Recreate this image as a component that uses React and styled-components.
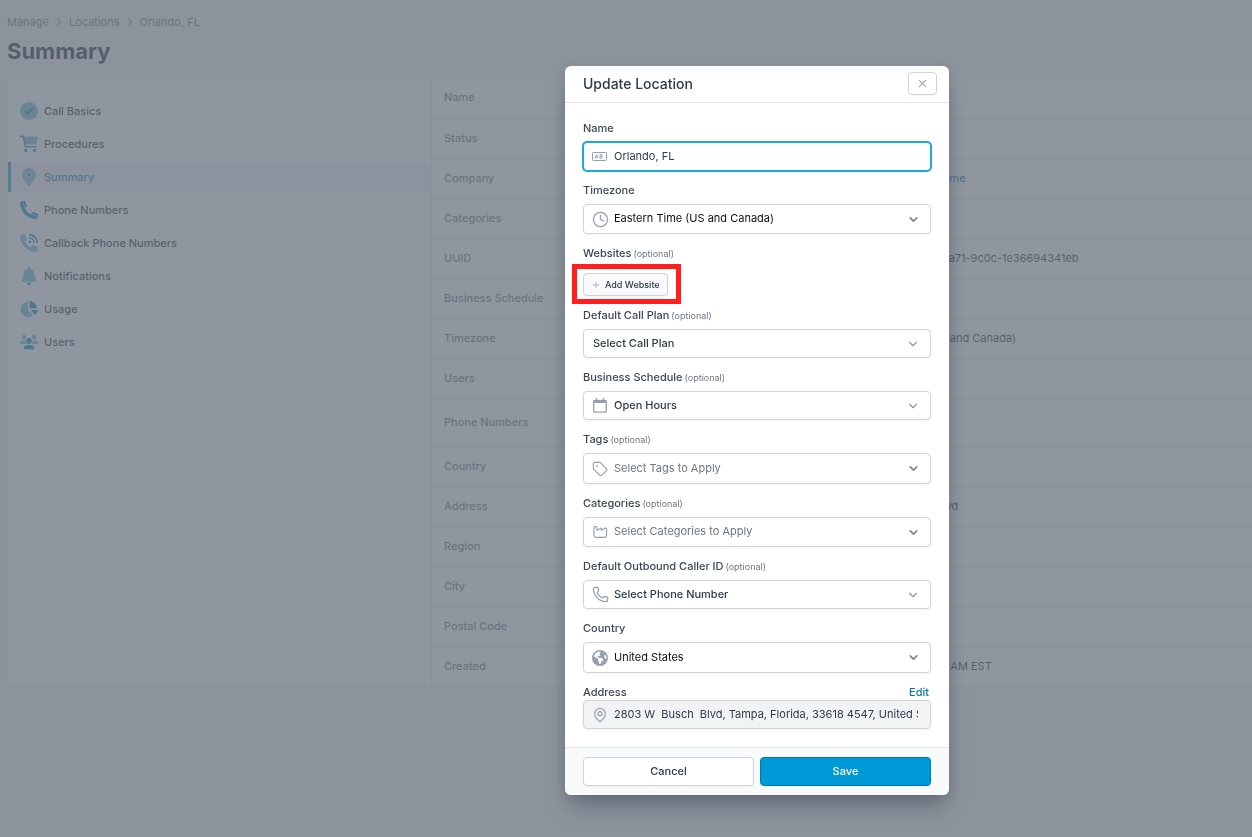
import { useState } from "react";
import styled, { createGlobalStyle, css } from "styled-components";
import { Clock, MapPin, Phone, Plus, Tag, X, ChevronRight, ChevronDown } from "lucide-react";
import { FaEarthAmericas } from "react-icons/fa6";

const GlobalStyle = createGlobalStyle`
  *, *::before, *::after { box-sizing: border-box; }
  body {
    margin: 0;
    background: #f3f4f6;
    color: #1f2937;
    font-family: Inter, "Liberation Sans", sans-serif;
    font-size: 11px;
    line-height: 16px;
  }
  html { background: #f3f4f6; }
  button, input, select { font: inherit; color: inherit; }
  a { color: inherit; text-decoration: none; }
`;

/* ---------- page ---------- */

const Page = styled.main`
  padding: 14px 0 0 7px;
`;

const Breadcrumbs = styled.nav`
  display: flex;
  align-items: center;
  gap: 3px;
  color: #6b7280;
  svg { color: #9ca3af; }
`;

const PageTitle = styled.h1`
  margin: 5px 0 10px;
  font-size: 22px;
  line-height: 32px;
  font-weight: 700;
  color: #0f2433;
`;

const Panel = styled.section`
  display: grid;
  grid-template-columns: 424px 1fr;
  background: #fff;
  border: 1px solid #e5e7eb;
  border-right: 0;
  border-radius: 6px 0 0 6px;
`;

const SideNav = styled.nav`
  display: flex;
  flex-direction: column;
  gap: 3px;
  padding: 18px 0;
  border-right: 1px solid #e5e7eb;
`;

const NavItem = styled.a`
  display: flex;
  align-items: center;
  gap: 6px;
  height: 30px;
  padding-left: 9px;
  border-left: 3px solid transparent;
  font-weight: 500;
  color: #1f2937;
  ${(p) =>
    p.$active &&
    css`
      background: #eff0fa;
      border-color: #0ea5d7;
      color: #0284b8;
    `}
`;

const Details = styled.dl`
  margin: 0;
`;

const DetailRow = styled.div`
  display: grid;
  grid-template-columns: 51fr 49fr;
  align-items: center;
  min-height: ${(p) => (p.$tall ? 48 : 40)}px;
  padding: 0 0 2px 12px;
  & + & {
    border-top: 1px solid #e5e7eb;
  }
  dt {
    color: #6b7280;
    font-weight: 500;
  }
  dd {
    margin: 0;
    color: #1f2937;
  }
  a {
    color: #0284c7;
    font-weight: 500;
  }
`;

/* ---------- modal ---------- */

const Backdrop = styled.div`
  position: fixed;
  inset: 0;
  display: flex;
  justify-content: center;
  align-items: flex-start;
  padding: 66px 0 0 262px;
  overflow: auto;
  background: rgba(107, 115, 127, 0.75);
`;

const Dialog = styled.form`
  width: 384px;
  border-radius: 6px;
  background: #fff;
  overflow: hidden;
  box-shadow: 0 16px 24px -4px rgba(30, 41, 59, 0.3), 0 4px 12px rgba(30, 41, 59, 0.15);
`;

const DialogHeader = styled.header`
  display: flex;
  align-items: center;
  justify-content: space-between;
  height: 37px;
  padding: 0 12px 1px 18px;
  border-bottom: 1px solid #e2e5e9;
  h2 {
    margin: 0;
    font-size: 14px;
    line-height: 20px;
    font-weight: 500;
    color: #2c3b4b;
  }
`;

const Button = styled.button`
  display: inline-flex;
  align-items: center;
  justify-content: center;
  height: 29px;
  padding: 0 8px 2px;
  border: 1px solid #ced4da;
  border-radius: 4px;
  background: #fff;
  color: #2c3b4b;
  font-weight: 500;
  box-shadow: 0 1px 2px rgba(0, 0, 0, 0.05);
  cursor: pointer;
`;

const CloseButton = styled(Button)`
  width: 29px;
  height: 23px;
  padding: 0;
  color: #a6adb5;
`;

const SmallButton = styled(Button)`
  gap: 4px;
  height: 23px;
  padding: 0 7px;
  background: #f8fafc;
  font-size: 9px;
  svg { color: #a6adb5; }
`;

const SaveButton = styled(Button)`
  background: #0099d8;
  border-color: #0079b0;
  color: #fff;
`;

const DialogBody = styled.div`
  display: flex;
  flex-direction: column;
  gap: 11px;
  padding: 17px 18px 18px;
`;

const DialogFooter = styled.footer`
  display: grid;
  grid-template-columns: 1fr 1fr;
  gap: 6px;
  padding: 9px 18px;
  border-top: 1px solid #e2e5e9;
  background: #f8fafc;
`;

const Field = styled.div`
  display: flex;
  flex-direction: column;
  gap: ${(p) => (p.$tight ? 0 : 6)}px;
`;

const LabelRow = styled.div`
  display: flex;
  justify-content: space-between;
  height: 16px;
  padding-right: 2px;
  font-weight: 500;
  color: #3b4856;
  small {
    margin-left: 2px;
    font-size: 9px;
    line-height: 1;
    font-weight: 400;
    color: #6b7784;
  }
  a { color: #0079b0; }
`;

// icon, control and chevron share one grid cell
const ControlBox = styled.div`
  display: grid;
  align-items: center;
  > * { grid-area: 1 / 1; }
  > svg {
    margin-left: 9px;
    color: #94a0ad;
    pointer-events: none;
    z-index: 1;
  }
  > svg:last-child:not(:first-child) {
    justify-self: end;
    margin: 0 11px 0 0;
  }
`;

const controlStyle = css`
  width: 100%;
  height: ${(p) => p.$height || 29}px;
  padding: 0 12px 2px ${(p) => (p.$plain ? 9 : 30)}px;
  border: 1px solid #ced4da;
  border-radius: 4px;
  background: #fff;
  box-shadow: 0 1px 2px rgba(0, 0, 0, 0.05);
  outline: none;
`;

const TextInput = styled.input`
  ${controlStyle}
  color: #2c3b4b;
  ${(p) =>
    p.$focused &&
    css`
      border-color: #1ba8dc;
      box-shadow: 0 0 0 1px #1ba8dc;
    `}
  &:read-only {
    background: #f1f3f5;
  }
`;

const Select = styled.select`
  ${controlStyle}
  appearance: none;
  color: ${(p) => (p.$tone === "muted" ? "#6b7784" : p.$tone === "black" ? "#0b0f14" : "#2c3b4b")};
  font-weight: ${(p) => (p.$tone ? 400 : 500)};
`;

const AddWebsite = styled.div`
  position: relative;
  align-self: flex-start;
  display: flex;
  margin-top: 6px;
  &::after {
    content: "";
    position: absolute;
    inset: -9px -13px -8px -11px;
    border: 5px solid #ff1f1f;
    pointer-events: none;
  }
`;

/* ---------- icons ---------- */

const LIGHT = "#66b8d8";
const DARK = "#0284b8";
const PHONE =
  "M497.4 361.8l-112-48a24 24 0 0 0-28 6.9l-49.6 60.6A370.7 370.7 0 0 1 130.6 204.1l60.6-49.6a23.9 23.9 0 0 0 6.9-28l-48-112A24.2 24.2 0 0 0 122.6.6l-104 24A24 24 0 0 0 0 48c0 256.5 207.9 464 464 464a24 24 0 0 0 23.4-18.6l24-104a24.3 24.3 0 0 0-14-27.6z";

function NavIcon({ name }) {
  const box = name === "pin" ? "-64 0 512 512" : name === "phone" || name === "callback" ? "0 0 512 512" : "0 0 18 18";
  return (
    <svg width="18" height="18" viewBox={box} fill="none" aria-hidden="true">
      {name === "check" && (
        <>
          <circle cx="9" cy="9" r="9" fill={LIGHT} />
          <path d="M5.6 9.3l2.3 2.3 4.6-4.9" stroke="#006ea0" strokeWidth="1.5" strokeLinecap="round" />
        </>
      )}
      {name === "cart" && (
        <>
          <path d="M4 1.5h14l-1.6 7.3a1 1 0 0 1-1 .8H5.6z" fill={LIGHT} />
          <path d="M.6 1.2h2.6l2.2 10.6h10.4" stroke={DARK} strokeWidth="1.4" strokeLinecap="round" strokeLinejoin="round" />
          <circle cx="5.7" cy="15.3" r="1.6" fill={DARK} />
          <circle cx="14.6" cy="15.3" r="1.6" fill={DARK} />
        </>
      )}
      {name === "pin" && (
        <>
          <path
            d="M215.7 499.2C267 435 384 279.4 384 192 384 86 298 0 192 0S0 86 0 192c0 87.4 117 243 168.3 307.2 12.3 15.3 35.1 15.3 47.4 0zM192 112a80 80 0 1 1 0 160 80 80 0 0 1 0-160z"
            fill={LIGHT}
            fillRule="evenodd"
          />
          <circle cx="192" cy="192" r="54" fill={DARK} />
        </>
      )}
      {name === "phone" && (
        <>
          <path d={PHONE} fill={DARK} />
          <path d="M78 8l70 190M312 366l194 72" stroke="#b3dcec" strokeWidth="22" />
        </>
      )}
      {name === "callback" && (
        <>
          <path d={PHONE} fill={LIGHT} />
          <path
            d="M272 24c120 0 216 96 216 216M272 112c71 0 128 57 128 128"
            stroke={DARK}
            strokeWidth="46"
            strokeLinecap="round"
          />
          <circle cx="286" cy="226" r="36" fill={DARK} />
        </>
      )}
      {name === "bell" && (
        <>
          <path
            d="M9 0a1.1 1.1 0 0 0-1.1 1.1v.7a5.4 5.4 0 0 0-4.3 5.3c0 3-.8 4.5-2 5.8-.8.9-.2 1.8.8 1.8h13.2c1 0 1.6-.9.8-1.8-1.2-1.3-2-2.8-2-5.8a5.4 5.4 0 0 0-4.3-5.3v-.7A1.1 1.1 0 0 0 9 0z"
            fill={LIGHT}
          />
          <path d="M6.8 15.8h4.4a2.2 2.2 0 0 1-4.4 0z" fill={DARK} />
        </>
      )}
      {name === "pie" && (
        <>
          <path d="M8 9.7l5.3 5.4A7.6 7.6 0 1 1 8 1.9z" fill={LIGHT} />
          <path d="M9.5 1a7.5 7.5 0 0 1 7.3 7.3H9.5zM10.5 10h7.3a8 8 0 0 1-2.3 5z" fill={DARK} />
        </>
      )}
      {name === "users" && (
        <>
          <circle cx="4" cy="4" r="2.2" fill={LIGHT} />
          <circle cx="14" cy="4" r="2.2" fill={LIGHT} />
          <path d="M0 10.2C0 8.4 1.2 7.2 3 7.2h2.6a4 4 0 0 0 .8 3.8H.8a.8.8 0 0 1-.8-.8zM18 10.2c0-1.8-1.2-3-3-3h-2.6a4 4 0 0 1-.8 3.8h5.6a.8.8 0 0 0 .8-.8z" fill={LIGHT} />
          <circle cx="9" cy="8" r="2.9" fill={DARK} />
          <path d="M3.7 15.3c0-2 1.6-3.4 3.6-3.4h3.4c2 0 3.6 1.4 3.6 3.4 0 .5-.4.9-.9.9H4.6a.9.9 0 0 1-.9-.9z" fill={DARK} />
        </>
      )}
    </svg>
  );
}

function NameIcon() {
  return (
    <svg width="15" height="9" viewBox="0 0 15 9" fill="none" stroke="currentColor" aria-hidden="true">
      <rect x="0.5" y="0.5" width="14" height="8" rx="0.8" />
      <path d="M3 6.4l1.500-3.900L6 6.400M3.500 5.300h2M8 2.600v3.700h1.500a.95.950 0 0 0 0-1.900H8h1.300a.9.900 0 0 0 0-1.800z" strokeWidth="0.9" />
    </svg>
  );
}

function CalendarIcon() {
  return (
    <svg width="16" height="15" viewBox="-1 0 16 15" fill="none" stroke="currentColor" aria-hidden="true">
      <rect x="0.7" y="2.5" width="12.6" height="11.7" rx="1" strokeWidth="1.3" />
      <path d="M.7 3.7h12.6" strokeWidth="2.6" />
      <path d="M3.5 0v3M10.5 0v3" strokeWidth="1.2" />
    </svg>
  );
}

function CategoryIcon() {
  return (
    <svg width="16" height="12" viewBox="-1 0 16 12" fill="none" stroke="currentColor" strokeLinejoin="round" strokeLinecap="round" aria-hidden="true">
      <path d="M1 1.600a1 1 0 0 1 1-1h.9a1 1 0 0 1 1 1v2.600l4.400-2.300v2.300l4.400-2.300a.6.600 0 0 1 .9.500v7.400a1.600 1.600 0 0 1-1.600 1.600H2.600A1.600 1.600 0 0 1 1 9.800z" strokeWidth="1.1" />
    </svg>
  );
}

/* ---------- data ---------- */

const navItems = [
  ["check", "Call Basics"],
  ["cart", "Procedures"],
  ["pin", "Summary"],
  ["phone", "Phone Numbers"],
  ["callback", "Callback Phone Numbers"],
  ["bell", "Notifications"],
  ["pie", "Usage"],
  ["users", "Users"],
];

const details = [
  ["Name", ""],
  ["Status", ""],
  ["Company", <a href="#company">Test Company Name</a>],
  ["Categories", ""],
  ["UUID", "5d0e82b6-3f1c-4a71-9c0c-1e36694341eb"],
  ["Business Schedule", ""],
  ["Timezone", "Eastern Time (US and Canada)"],
  ["Users", ""],
  ["Phone Numbers", "", true],
  ["Country", ""],
  ["Address", "2803 W Busch Blvd"],
  ["Region", ""],
  ["City", ""],
  ["Postal Code", ""],
  ["Created", "Jan 2, 2024 10:21 AM EST"],
];

function SelectField({ id, label, optional, icon, value, tone, height }) {
  return (
    <Field>
      <LabelRow>
        <label htmlFor={id}>
          {label}
          {optional && <small>(optional)</small>}
        </label>
      </LabelRow>
      <ControlBox>
        {icon}
        <Select id={id} $tone={tone} $height={height} $plain={!icon}>
          <option>{value}</option>
        </Select>
        <ChevronDown size={tone ? 13 : 14} strokeWidth={tone ? 3 : 2} color={tone ? "#7d8185" : "#8a96a3"} />
      </ControlBox>
    </Field>
  );
}

function UpdateLocation() {
  const [name, setName] = useState("Orlando, FL");

  return (
    <Dialog role="dialog" aria-labelledby="dialog-title" onSubmit={(e) => e.preventDefault()}>
      <DialogHeader>
        <h2 id="dialog-title">Update Location</h2>
        <CloseButton type="button" aria-label="Close">
          <X size={13} strokeWidth={2} />
        </CloseButton>
      </DialogHeader>
      <DialogBody>
        <Field>
          <LabelRow>
            <label htmlFor="name">Name</label>
          </LabelRow>
          <ControlBox>
            <NameIcon />
            <TextInput id="name" $focused value={name} onChange={(e) => setName(e.target.value)} />
          </ControlBox>
        </Field>
        <SelectField id="timezone" label="Timezone" icon={<Clock size={17} strokeWidth={1.8} />} value="Eastern Time (US and Canada)" tone="black" height={30} />
        <Field>
          <LabelRow>
            <span>
              Websites<small>(optional)</small>
            </span>
          </LabelRow>
          <AddWebsite>
            <SmallButton type="button">
              <Plus size={10} strokeWidth={2} />
              Add Website
            </SmallButton>
          </AddWebsite>
        </Field>
        <SelectField id="plan" label="Default Call Plan" optional value="Select Call Plan" />
        <SelectField id="schedule" label="Business Schedule" optional icon={<CalendarIcon />} value="Open Hours" />
        <SelectField id="tags" label="Tags" optional icon={<Tag size={16} strokeWidth={1.7} />} value="Select Tags to Apply" tone="muted" height={31} />
        <SelectField id="categories" label="Categories" optional icon={<CategoryIcon />} value="Select Categories to Apply" tone="muted" height={30} />
        <SelectField id="caller" label="Default Outbound Caller ID" optional icon={<Phone size={17} strokeWidth={1.8} />} value="Select Phone Number" />
        <SelectField id="country" label="Country" icon={<FaEarthAmericas size={16} />} value="United States" tone="black" height={31} />
        <Field $tight>
          <LabelRow>
            <label htmlFor="address">Address</label>
            <a href="#edit">Edit</a>
          </LabelRow>
          <ControlBox>
            <MapPin size={16} strokeWidth={1.8} />
            <TextInput id="address" readOnly value="2803 W  Busch  Blvd, Tampa, Florida, 33618 4547, United States" />
          </ControlBox>
        </Field>
      </DialogBody>
      <DialogFooter>
        <Button type="button">Cancel</Button>
        <SaveButton type="submit">Save</SaveButton>
      </DialogFooter>
    </Dialog>
  );
}

export default function App() {
  return (
    <>
      <GlobalStyle />
      <Page>
        <Breadcrumbs aria-label="Breadcrumb">
          <a href="#manage">Manage</a>
          <ChevronRight size={14} strokeWidth={2} />
          <a href="#locations">Locations</a>
          <ChevronRight size={14} strokeWidth={2} />
          <a href="#orlando">Orlando, FL</a>
        </Breadcrumbs>
        <PageTitle>Summary</PageTitle>
        <Panel>
          <SideNav>
            {navItems.map(([icon, label]) => (
              <NavItem key={label} href="#nav" $active={label === "Summary"}>
                <NavIcon name={icon} />
                {label}
              </NavItem>
            ))}
          </SideNav>
          <Details>
            {details.map(([label, value, tall]) => (
              <DetailRow key={label} $tall={tall}>
                <dt>{label}</dt>
                <dd>{value}</dd>
              </DetailRow>
            ))}
          </Details>
        </Panel>
      </Page>
      <Backdrop>
        <UpdateLocation />
      </Backdrop>
    </>
  );
}
